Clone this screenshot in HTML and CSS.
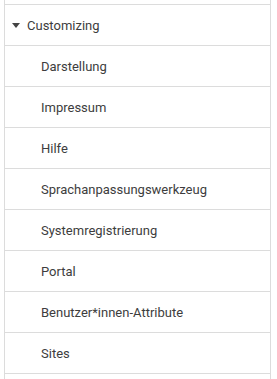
FILE: index.html
```html
<!DOCTYPE html>
<html>
<head>
<meta charset="utf-8">
<link rel="stylesheet" href="styles.css">
</head>
<body>
<div class="menu">
  <div class="spacer"></div>
  <div class="row head"><span class="caret"></span>Customizing</div>
  <div class="row sub">Darstellung</div>
  <div class="row sub">Impressum</div>
  <div class="row sub">Hilfe</div>
  <div class="row sub">Sprachanpassungswerkzeug</div>
  <div class="row sub">Systemregistrierung</div>
  <div class="row sub">Portal</div>
  <div class="row sub">Benutzer*innen-Attribute</div>
  <div class="row sub">Sites</div>
  <div class="row sub"></div>
</div>
</body>
</html>
```
FILE: styles.css
```css
html, body {
  margin: 0;
  padding: 0;
  background: #fff;
}
.menu {
  margin-left: 4px;
  width: 265px;
  border-left: 1px solid #dcdcdc;
  border-right: 1px solid #dcdcdc;
  font-family: Roboto, "Liberation Sans", sans-serif;
  font-size: 13px;
  color: #3d3d3d;
}
.spacer {
  height: 4px;
}
.row {
  height: 40px;
  border-top: 1px solid #dcdcdc;
  display: flex;
  align-items: center;
  box-sizing: content-box;
}
.head {
  padding-left: 7px;
}
.caret {
  width: 0;
  height: 0;
  border-left: 4px solid transparent;
  border-right: 4px solid transparent;
  border-top: 5px solid #444;
  margin-right: 7px;
}
.sub {
  padding-left: 36px;
}
```
